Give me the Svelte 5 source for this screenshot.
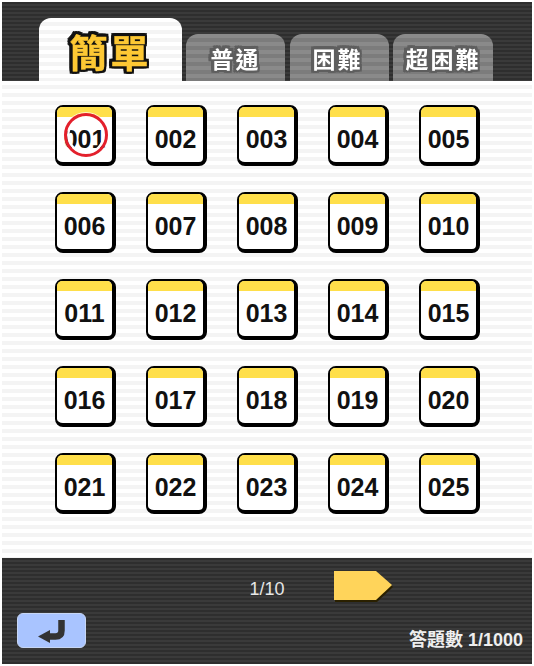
<script>
  const levels = [
    { name: '普通', cls: 'tab-normal' },
    { name: '困難', cls: 'tab-hard' },
    { name: '超困難', cls: 'tab-expert' }
  ];
  const stages = Array.from({ length: 25 }, (_, i) => String(i + 1).padStart(3, '0'));
  const current = '001';
</script>

<div class="screen">
  <header class="top">
    <div class="tab tab-active"><span class="tab-title">簡單</span></div>
    {#each levels as level}
      <div class="tab {level.cls}"><span class="tab-label">{level.name}</span></div>
    {/each}
  </header>

  <main class="board">
    {#each stages as stage}
      <div class="card">
        <div class="card-band"></div>
        <div class="card-num">{stage}</div>
        {#if stage === current}
          <div class="ring"></div>
        {/if}
      </div>
    {/each}
  </main>

  <footer class="bottom">
    <div class="pager">
      <span class="page-no">1/10</span>
      <svg class="next" width="60" height="31" viewBox="0 0 60 31">
        <polygon points="0,1 42,1 58,15 42,30 0,30" fill="#2a2000" transform="translate(1 1)" />
        <polygon points="0,0 42,0 58,14 42,29 0,29" fill="#ffd45a" />
      </svg>
    </div>
    <div class="bar">
      <button class="back" aria-label="back">
        <svg width="27" height="23" viewBox="0 0 27 23">
          <path d="M23.5 0 V10.5 Q23.5 16.5 17.5 16.5 H9" fill="none" stroke="#333" stroke-width="6.5" />
          <polygon points="0,16.5 12,10 12,23" fill="#333" />
        </svg>
      </button>
      <span class="count">答題數 1/1000</span>
    </div>
  </footer>
</div>

<style>
  :global(body) {
    margin: 0;
    background: #fff;
  }

  .screen {
    width: 530px;
    height: 662px;
    margin: 2px;
    display: flex;
    flex-direction: column;
    font-family: "Liberation Sans", "Noto Sans CJK TC", sans-serif;
  }

  .top {
    height: 79px;
    box-sizing: border-box;
    padding-left: 37px;
    display: flex;
    align-items: flex-end;
    gap: 4px;
    background: repeating-linear-gradient(180deg, #2e2e2e 0 2px, #3a3a3a 2px 4px);
  }

  .tab {
    display: flex;
    align-items: center;
    justify-content: center;
    border-radius: 12px 12px 0 0;
    height: 47px;
    background: repeating-linear-gradient(180deg, #8a8a8a 0 4px, #7c7c7c 4px 8px);
  }

  .tab-active {
    width: 143px;
    height: 63px;
    background: repeating-linear-gradient(180deg, #fff 0 4px, #f4f4f4 4px 8px);
  }

  .tab-normal {
    width: 99px;
  }

  .tab-hard {
    width: 99px;
    margin-left: 1px;
    padding-right: 4px;
    box-sizing: border-box;
  }

  .tab-expert {
    width: 100px;
  }

  /* outline built from shadows so the corners stay round like the artwork */
  .tab-title {
    font-size: 38px;
    font-weight: 700;
    line-height: 1;
    letter-spacing: 3px;
    color: #fdc834;
    -webkit-text-stroke: 0.5px #fdc834;
    filter: drop-shadow(2.5px 0 0.5px #111) drop-shadow(-2.5px 0 0.5px #111) drop-shadow(0 2.5px 0.5px #111) drop-shadow(0 -2.5px 0.5px #111);
    padding-top: 9px;
  }

  .tab-label {
    font-size: 23px;
    font-weight: 700;
    line-height: 1;
    letter-spacing: 2px;
    color: #fff;
    filter: drop-shadow(2.5px 0 0.5px #5e5e5e) drop-shadow(-2.5px 0 0.5px #5e5e5e) drop-shadow(0 2.5px 0.5px #5e5e5e) drop-shadow(0 -2.5px 0.5px #5e5e5e);
    padding-top: 5px;
  }

  .board {
    height: 477px;
    box-sizing: border-box;
    padding: 24px 0 0 53px;
    display: grid;
    grid-template-columns: repeat(5, 61px);
    grid-auto-rows: 61px;
    column-gap: 30px;
    row-gap: 26px;
    background: repeating-linear-gradient(180deg, #fff 0 4px, #f4f4f4 4px 8px);
  }

  .card {
    position: relative;
    box-sizing: border-box;
    border: 2px solid #000;
    border-right-width: 4px;
    border-bottom-width: 4px;
    border-radius: 8px;
    background: #fff;
    display: flex;
    flex-direction: column;
  }

  .card-band {
    height: 10px;
    background: #ffdf4a;
    border-radius: 5px 5px 0 0;
  }

  .card-num {
    flex: 1;
    display: flex;
    align-items: center;
    justify-content: center;
    font-size: 25px;
    font-weight: 700;
    color: #111;
    padding-bottom: 1px;
  }

  .ring {
    position: absolute;
    left: 7px;
    top: 6px;
    width: 44px;
    height: 44px;
    box-sizing: border-box;
    border: 3.5px solid #e3202c;
    border-radius: 50%;
    box-shadow: inset 0 0 0 2.5px #fff, 0 0 0 1px rgba(255, 255, 255, 0.7);
  }

  .bottom {
    flex: 1;
    display: flex;
    flex-direction: column;
    justify-content: space-between;
    box-sizing: border-box;
    padding: 13px 9px 16px 15px;
    background: repeating-linear-gradient(180deg, #2e2e2e 0 2px, #3a3a3a 2px 4px);
  }

  .pager {
    display: flex;
    align-items: center;
    padding-left: 233px;
    gap: 50px;
  }

  .page-no {
    font-size: 18px;
    color: #e6e6e6;
    width: 34px;
    display: flex;
    justify-content: center;
    white-space: nowrap;
    padding-top: 6px;
  }

  .next {
    display: block;
  }

  .bar {
    display: flex;
    align-items: flex-end;
    justify-content: space-between;
  }

  .back {
    width: 69px;
    height: 35px;
    padding: 2px 0 0;
    display: flex;
    align-items: center;
    justify-content: center;
    border: 1px solid #c6d6f5;
    border-radius: 6px;
    background: #a9c4ff;
  }

  .count {
    font-size: 18px;
    font-weight: 700;
    color: #eee;
    margin-bottom: -3px;
  }
</style>
